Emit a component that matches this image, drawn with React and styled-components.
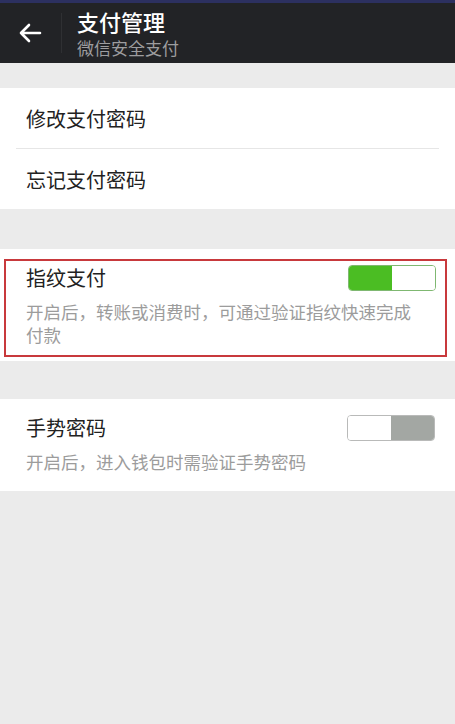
import React from 'react'
import styled, { createGlobalStyle } from 'styled-components'

const GlobalStyle = createGlobalStyle`
  html, body {
    margin: 0;
    padding: 0;
    background: #ebebeb;
  }
  body {
    font-family: 'Noto Sans CJK SC', 'Noto Sans', sans-serif;
  }
`

const Page = styled.div`
  width: 455px;
  min-height: 724px;
  background: #ebebeb;
  display: flex;
  flex-direction: column;
`

const Header = styled.header`
  height: 60px;
  border-top: 3px solid #2c3060;
  background: #222326;
  display: flex;
  align-items: center;
`

const BackButton = styled.button`
  width: 62px;
  height: 40px;
  padding: 0 2px 0 0;
  border: none;
  border-right: 1px solid #2f3033;
  background: transparent;
  display: flex;
  align-items: center;
  justify-content: center;
  cursor: pointer;
`

const TitleBox = styled.div`
  display: flex;
  flex-direction: column;
  padding-left: 15px;
`

const Title = styled.h1`
  margin: 0;
  font-size: 22px;
  font-weight: 500;
  line-height: 28px;
  color: #ffffff;
`

const Subtitle = styled.span`
  margin-top: 2px;
  font-size: 17px;
  line-height: 22px;
  color: #9d9d9f;
`

const Section = styled.section`
  background: #ffffff;
  margin-top: ${({ $gap }) => $gap}px;
  padding: ${({ $pad }) => $pad || '0'};
`

const LinkRow = styled.div`
  height: 60px;
  display: flex;
  align-items: center;
  padding-left: 26px;
  font-size: 20px;
  color: #222;
  & + & {
    border-top: 1px solid #e6e6e6;
    margin-left: 16px;
    margin-right: 16px;
    padding-left: 10px;
  }
`

const Highlight = styled.div`
  border: 2.5px solid #c8393c;
  padding: 4px 9px 9px 20px;
`

const SwitchBlock = styled.div`
  padding: ${({ $plain }) => ($plain ? '16px 20px 18px 26px' : '0')};
`

const SwitchHead = styled.div`
  display: flex;
  align-items: center;
  justify-content: space-between;
`

const SwitchTitle = styled.span`
  font-size: 20px;
  color: #222;
  line-height: 26px;
`

const Toggle = styled.div`
  width: 88px;
  height: 26px;
  box-sizing: border-box;
  border-radius: 4px;
  overflow: hidden;
  display: flex;
  border: 1px solid ${({ $on }) => ($on ? '#7fb871' : '#b9bab9')};
`

const Half = styled.span`
  flex: 1;
  background: ${({ $fill }) => $fill};
`

const Desc = styled.p`
  margin: 9px 0 0;
  max-width: 400px;
  font-size: 17.5px;
  line-height: 23px;
  color: #9c9c9c;
`

const Switch = ({ on }) => (
  <Toggle $on={on}>
    <Half $fill={on ? '#4bbd23' : '#ffffff'} />
    <Half $fill={on ? '#ffffff' : '#a3a7a3'} />
  </Toggle>
)

const SwitchItem = ({ title, desc, on, plain }) => (
  <SwitchBlock $plain={plain}>
    <SwitchHead>
      <SwitchTitle>{title}</SwitchTitle>
      <Switch on={on} />
    </SwitchHead>
    <Desc>{desc}</Desc>
  </SwitchBlock>
)

const App = () => (
  <Page>
    <GlobalStyle />
    <Header>
      <BackButton aria-label="back">
        <svg width="24" height="20" viewBox="0 0 24 20" fill="none">
          <path
            d="M22 10H3M11 2L3 10l8 8"
            stroke="#fff"
            strokeWidth="2.6"
            strokeLinecap="round"
            strokeLinejoin="round"
          />
        </svg>
      </BackButton>
      <TitleBox>
        <Title>支付管理</Title>
        <Subtitle>微信安全支付</Subtitle>
      </TitleBox>
    </Header>

    <Section $gap={25}>
      <LinkRow>修改支付密码</LinkRow>
      <LinkRow>忘记支付密码</LinkRow>
    </Section>

    <Section $gap={40} $pad="10px 8px 4px 4px">
      <Highlight>
        <SwitchItem
          on
          title="指纹支付"
          desc="开启后，转账或消费时，可通过验证指纹快速完成付款"
        />
      </Highlight>
    </Section>

    <Section $gap={38}>
      <SwitchItem
        plain
        title="手势密码"
        desc="开启后，进入钱包时需验证手势密码"
      />
    </Section>
  </Page>
)

export default App
